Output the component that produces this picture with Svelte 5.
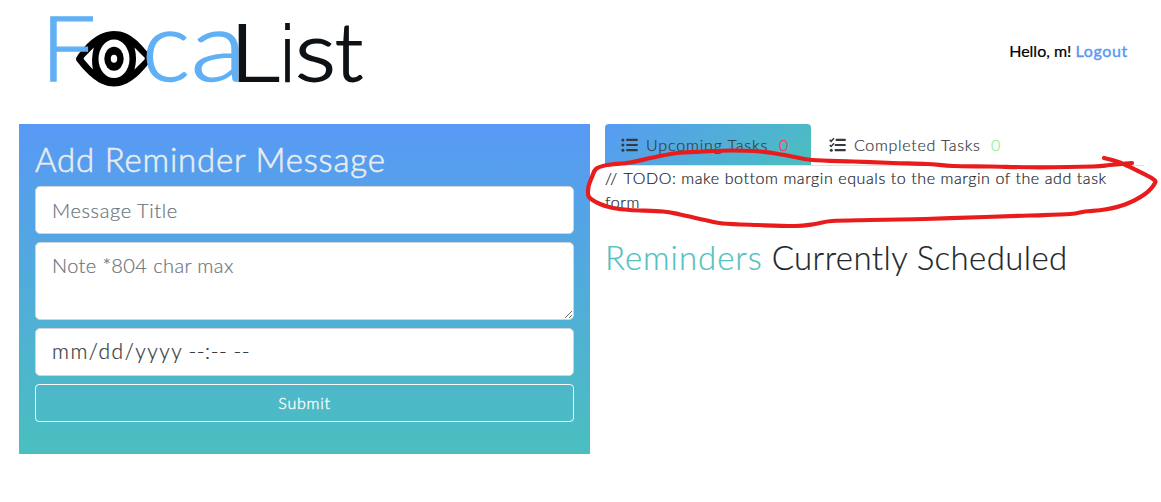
<script>
  const strokePoints = [
    [1104, 158], [1120, 162.5], [1138, 171], [1153, 179], [1155, 183], [1145, 194], [1125, 204.5], [1105, 209.5],
    [1085, 211.5], [1070, 214], [1030, 215.5], [985, 217], [925, 219], [870, 220], [832, 221], [815, 224], [795, 226],
    [757, 225], [723, 223.5], [707, 220.5], [680, 214.5], [663, 211.5], [630, 210], [613, 208], [600, 204], [589, 197],
    [588.5, 187], [592, 177], [596, 169], [607, 165], [630, 162.5], [653, 157.5], [677, 153], [703, 151.5],
    [730, 150.5], [760, 151.5], [787, 155.5], [812, 160], [853, 161.5], [893, 163], [927, 164], [953, 166],
    [990, 166.5], [1040, 167.3], [1093, 166.5], [1110, 165], [1132, 163]
  ];

  // Smooth curve through every point (Catmull-Rom converted to cubic Béziers)
  function smooth(p) {
    let d = `M${p[0][0]} ${p[0][1]}`;
    for (let i = 0; i < p.length - 1; i++) {
      const a = p[i - 1] ?? p[i], b = p[i], c = p[i + 1], e = p[i + 2] ?? c;
      const x1 = b[0] + (c[0] - a[0]) / 6, y1 = b[1] + (c[1] - a[1]) / 6;
      const x2 = c[0] - (e[0] - b[0]) / 6, y2 = c[1] - (e[1] - b[1]) / 6;
      d += `C${x1} ${y1} ${x2} ${y2} ${c[0]} ${c[1]}`;
    }
    return d;
  }

  let title = $state('');
  let note = $state('');
</script>

<div class="page">
  <header>
    <svg class="logo" width="330" height="115" viewBox="40 0 330 115" role="img" aria-label="FocaList">
      <path d="M77 56.5C84 46 97 31 114 31S142 45 151 56.5Q152.500 58.500 151 60.500C141 74 129 86.500 114 86.500S87 74 77 61.500Q75 59 77 56.500Z" fill="#000" />
      <path d="M93.800 47.500Q91 58.500 92.800 69.500L84 59.500Q83.200 58.500 84 57.500ZM134.500 47.500Q137.500 58.500 134.500 69.500L144.500 59.500Q145.300 58.500 144.500 57.500Z" fill="#fff" />
      <ellipse cx="114" cy="58.800" rx="15.500" ry="19.300" fill="#fff" />
      <ellipse cx="114" cy="58.800" rx="9.700" ry="12" fill="#000" />
      <ellipse cx="114" cy="58.800" rx="3.200" ry="4" fill="#fff" />
      <g class="blue">
        <text x="40.800" y="81.200" font-size="91" textLength="55" lengthAdjust="spacingAndGlyphs">F</text>
        <text x="142" y="81.300" font-size="96" textLength="48" lengthAdjust="spacingAndGlyphs">c</text>
        <text x="190.500" y="81.300" font-size="96" textLength="56" lengthAdjust="spacingAndGlyphs">a</text>
      </g>
      <g class="dark">
        <text x="229.500" y="80.800" font-size="78.500" textLength="50" lengthAdjust="spacingAndGlyphs">L</text>
        <text class="i" x="281.500" y="81.500" font-size="81" textLength="12" lengthAdjust="spacingAndGlyphs">i</text>
        <text x="295" y="81" font-size="83" textLength="41" lengthAdjust="spacingAndGlyphs">s</text>
        <text x="335" y="81" font-size="81" textLength="28" lengthAdjust="spacingAndGlyphs">t</text>
      </g>
    </svg>
    <div class="user"><span>Hello, m!</span> <a href="#logout">Logout</a></div>
  </header>

  <main>
    <form onsubmit={(e) => e.preventDefault()}>
      <h2>Add Reminder Message</h2>
      <input class="field title" placeholder="Message Title" bind:value={title} />
      <textarea class="field note" placeholder="Note *804 char max" maxlength="804" bind:value={note}></textarea>
      <div class="field date"><span class="day">mm/dd/yyyy</span><span class="time">--:-- --</span></div>
      <button>Submit</button>
    </form>

    <section>
      <nav>
        <div class="tab active">
          <svg width="17" height="16" viewBox="0 0 17 16" fill="currentColor">
            <circle cx="1.900" cy="2.900" r="1.500" /><circle cx="1.900" cy="8.100" r="1.500" /><circle cx="1.900" cy="13.200" r="1.500" />
            <rect x="5.300" y="1.800" width="11.400" height="2.100" rx=".5" /><rect x="5.300" y="7" width="11.400" height="2.100" rx=".5" /><rect x="5.300" y="12.100" width="11.400" height="2.100" rx=".5" />
          </svg>
          <span class="up">Upcoming Tasks</span><span class="count red">0</span>
        </div>
        <div class="tab">
          <svg width="17" height="16" viewBox="0 0 17 16" fill="currentColor">
            <path d="M.7 2.900L2.100 4.300L5 1.200M.7 8L2.100 9.400L5 6.300" fill="none" stroke="currentColor" stroke-width="1.500" />
            <circle cx="2.300" cy="13.200" r="1.500" />
            <rect x="6.700" y="1.800" width="10" height="2.100" rx=".5" /><rect x="5.700" y="7" width="11" height="2.100" rx=".5" /><rect x="5.700" y="12.100" width="11" height="2.100" rx=".5" />
          </svg>
          <span class="done">Completed Tasks</span><span class="count green">0</span>
        </div>
      </nav>
      <p><span class="slashes">//</span> TODO: make bottom margin equals to the margin of the add task form</p>
      <h2><span class="teal">Reminders</span> <span class="sched">Currently Scheduled</span></h2>
    </section>
  </main>

  <svg class="marker" width="1161" height="502" viewBox="0 0 1161 502">
    <path d={smooth(strokePoints)} />
  </svg>
</div>

<style>
  :global(body) { background: #fff; }
  .page {
    position: relative;
    width: 1161px;
    height: 502px;
    overflow: hidden;
    box-sizing: border-box;
    font: 300 16px/24px Lato, sans-serif;
    color: #212529;
    -webkit-text-stroke: .2px;
  }
  header {
    display: flex;
    justify-content: space-between;
    height: 124px;
    padding: 0 33px 0 40px;
    box-sizing: border-box;
  }
  .logo { overflow: visible; font-family: Lato, sans-serif; font-weight: 300; -webkit-text-stroke: initial; }
  .blue { fill: #61b0f5; stroke: #61b0f5; stroke-width: 1.4px; }
  .dark { fill: #0d1217; stroke: #0d1217; stroke-width: 1.8px; }
  .i { font-family: "Liberation Sans", sans-serif; stroke: none; }
  .user { margin-top: 39px; font-weight: 400; color: #000; white-space: nowrap; }
  .user a { color: #5899f5; text-decoration: none; letter-spacing: .65px; -webkit-text-stroke: .4px; }
  main { display: flex; gap: 15px; padding: 0 17px 0 19px; }
  form {
    display: flex;
    flex-direction: column;
    gap: 8px;
    width: 571px;
    height: 330px;
    padding: 16px;
    box-sizing: border-box;
    background: linear-gradient(#5899f5, #4abfbf);
  }
  h2 { margin: 0; font-size: 33px; line-height: 38px; font-weight: 300; white-space: nowrap; }
  form h2 { color: #e9ecef; letter-spacing: .8px; -webkit-text-stroke: .6px #e9ecef; }
  .field {
    display: block;
    width: 100%;
    box-sizing: border-box;
    margin: 0;
    padding: 8px 16px;
    border: 1px solid #ced4da;
    border-radius: 5px;
    background: #fff;
    font: 300 20px/30px Lato, sans-serif;
    color: #495057;
    outline: none;
  }
  .field::placeholder { color: #6c757d; opacity: 1; }
  .title { height: 48px; letter-spacing: .6px; }
  .note { height: 78px; padding-top: 7px; letter-spacing: .4px; resize: vertical; overflow: hidden; }
  .date { display: flex; gap: 5px; height: 48px; padding-top: 7px; font-size: 21px; white-space: pre; color: #343a40; }
  .day { letter-spacing: 1.5px; }
  .time { letter-spacing: .55px; }
  button {
    height: 38px;
    padding: 0;
    border: 1px solid #f8f9fa;
    border-radius: 4px;
    background: transparent;
    color: #f8f9fa;
    font: 300 16px/24px Lato, sans-serif;
    letter-spacing: .75px;
    -webkit-text-stroke: .4px;
  }
  section { width: 539px; }
  nav { display: flex; height: 42px; box-sizing: border-box; border-bottom: 1px solid #dee2e6; }
  .tab {
    display: flex;
    align-items: center;
    height: 41px;
    padding: 1px 17px 0 16px;
    box-sizing: border-box;
    color: #343a40;
    white-space: nowrap;
  }
  .tab svg { flex: none; margin-right: 8px; }
  .active {
    width: 206px;
    margin-right: 2px;
    border-radius: 4px 4px 0 0;
    background: linear-gradient(135deg, #579bf3, #4abfbf);
  }
  .up { width: 133px; letter-spacing: .85px; }
  .done { width: 137px; letter-spacing: .7px; }
  .red { color: #ff2f4f; }
  .green { color: #90ee90; }
  p { margin: 0; letter-spacing: .58px; }
  .slashes { letter-spacing: 1.8px; }
  section h2 { margin-top: 24px; }
  .teal { color: #4fc1c0; letter-spacing: .95px; }
  .sched { letter-spacing: .4px; }
  .marker { position: absolute; inset: 0; pointer-events: none; }
  .marker path { fill: none; stroke: #e81c1c; stroke-width: 4.2px; stroke-linecap: round; stroke-linejoin: round; }
</style>
